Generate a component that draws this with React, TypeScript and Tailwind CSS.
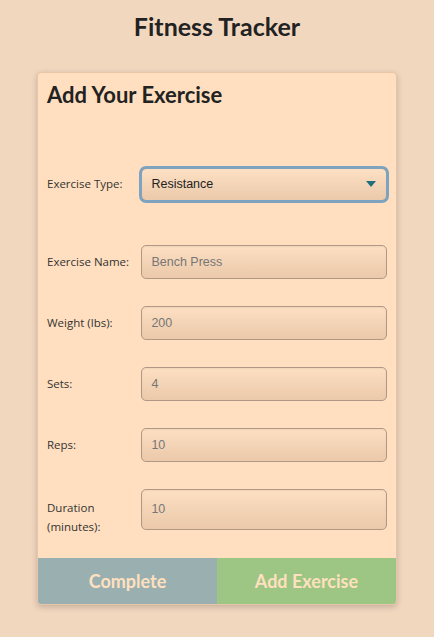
import React from "react";

const inputCls =
  "w-[247px] rounded-[5px] border border-[#b09884] bg-gradient-to-b from-[#fddfc2] to-[#ebc9aa] pl-[9px] flex items-center text-[12.5px] text-[#777] shadow-[inset_0_1px_2px_rgba(0,0,0,0.05)]";

function Row({ label, value }: { label: React.ReactNode; value: string }) {
  return (
    <div className="flex items-center h-[34px]">
      <div className="w-[95px] text-[11.5px] leading-[16px] text-[#333]" style={{ fontFamily: '"Open Sans", sans-serif' }}>
        {label}
      </div>
      <div className={inputCls + " h-[34px]"} style={{ fontFamily: '"Liberation Sans", Arial, sans-serif' }}>
        {value}
      </div>
    </div>
  );
}

export default function App() {
  return (
    <div className="min-h-[637px] bg-[#f2d7bf] flex flex-col items-center" style={{ fontFamily: "Lato, sans-serif" }}>
      <h1 className="mt-[8px] text-[25px] leading-[36px] font-bold text-[#222]">Fitness Tracker</h1>
      <div className="mt-[28px] w-[360px] bg-[#ffdfbf] rounded-[4px] border border-[#e6c6a8] shadow-[0_2px_6px_rgba(0,0,0,0.2)] overflow-hidden">
        <div className="pl-[9px] pr-[9px]">
          <h2 className="mt-[7px] text-[22px] leading-[30px] font-bold text-[#222]">Add Your Exercise</h2>
          <div className="mt-[57px] flex items-center h-[34px]">
            <div className="w-[95px] text-[11.5px] text-[#333]" style={{ fontFamily: '"Open Sans", sans-serif' }}>
              Exercise Type:
            </div>
            <div
              className="w-[247px] h-[33px] rounded-[5px] bg-gradient-to-b from-[#fde0c4] to-[#ebc9aa] pl-[9px] pr-[10px] flex items-center justify-between text-[12.5px] text-[#222] border border-[#a88f7c] outline outline-[3px] outline-[#7ea3be] outline-offset-[-1px]"
              style={{ fontFamily: '"Liberation Sans", Arial, sans-serif' }}
            >
              <span>Resistance</span>
              <svg width="10" height="6" viewBox="0 0 10 6">
                <path d="M0 0 L10 0 L5 6 Z" fill="#1f6f7f" />
              </svg>
            </div>
          </div>
          <div className="mt-[44px] flex flex-col gap-[27px] pb-[22px]">
            <Row label="Exercise Name:" value="Bench Press" />
            <Row label="Weight (lbs):" value="200" />
            <Row label="Sets:" value="4" />
            <Row label="Reps:" value="10" />
            <div className="flex items-start">
              <div className="w-[95px] mt-[9px] text-[11.5px] leading-[19px] text-[#333]" style={{ fontFamily: '"Open Sans", sans-serif' }}>
                Duration
                <br />
                (minutes):
              </div>
              <div className={inputCls + " h-[41px]"} style={{ fontFamily: '"Liberation Sans", Arial, sans-serif' }}>
                10
              </div>
            </div>
          </div>
        </div>
        <div className="flex h-[46px]">
          <div className="flex-1 bg-[#9aafb0] flex items-center justify-center text-[18px] font-bold text-[#ffe0bf]">Complete</div>
          <div className="flex-1 bg-[#9dc583] flex items-center justify-center text-[18px] font-bold text-[#ffe0bf]">Add Exercise</div>
        </div>
      </div>
    </div>
  );
}
